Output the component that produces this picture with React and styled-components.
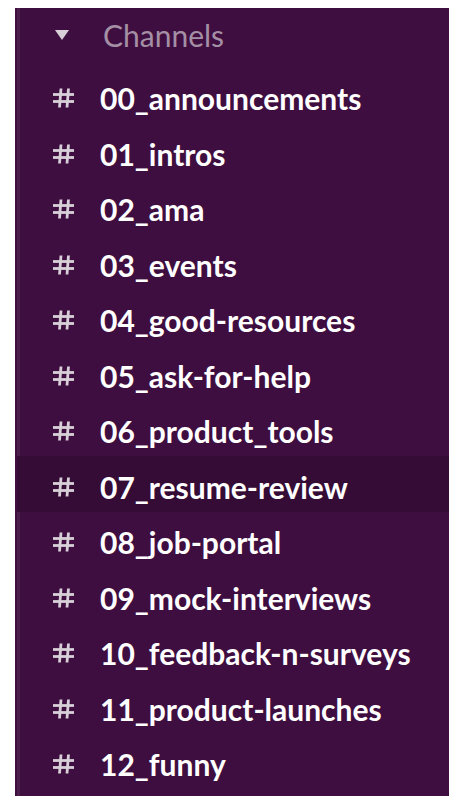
import React from "react";
import styled, { createGlobalStyle } from "styled-components";

const GlobalStyle = createGlobalStyle`
  body {
    margin: 0;
    background: #ffffff;
    font-family: Lato, "Open Sans", sans-serif;
  }
`;

const Page = styled.div`
  padding: 8px 9px 8px 15px;
  width: 458px;
  box-sizing: border-box;
`;

const Sidebar = styled.div`
  background: #3f0e40;
  border-left: 2px solid #3f0e40;
  box-shadow: inset 3px 0 0 #4a1d4b;
  padding-bottom: 7px;
`;

const Header = styled.div`
  height: 59.5px;
  display: flex;
  align-items: center;
  padding-left: 38px;
  box-sizing: border-box;
`;

const Caret = styled.svg`
  width: 14px;
  height: 10px;
  margin-right: 34px;
  margin-top: -6px;
`;

const HeaderLabel = styled.span`
  font-size: 30px;
  font-weight: 400;
  color: #a48fa5;
  margin-top: -5px;
`;

const Row = styled.div`
  height: 55.5px;
  display: flex;
  align-items: center;
  padding: 6px 0 0 35px;
  box-sizing: border-box;
  background: ${(p) => (p.$active ? "#350c36" : "transparent")};
`;

const Hash = styled.svg`
  width: 23px;
  height: 20px;
  margin-right: 25px;
  flex-shrink: 0;
`;

const Name = styled.span`
  font-size: 30px;
  font-weight: 700;
  color: #ffffff;
  white-space: nowrap;
`;

const channels = [
  "00_announcements",
  "01_intros",
  "02_ama",
  "03_events",
  "04_good-resources",
  "05_ask-for-help",
  "06_product_tools",
  "07_resume-review",
  "08_job-portal",
  "09_mock-interviews",
  "10_feedback-n-surveys",
  "11_product-launches",
  "12_funny",
];

function HashIcon() {
  return (
    <Hash viewBox="0 0 23 20">
      <g stroke="#d8d0d8" strokeWidth="2.8" fill="none">
        <path d="M1 6.5H22" />
        <path d="M1 13.5H22" />
        <path d="M9 0.5L7.5 19.5" />
        <path d="M16.5 0.5L15 19.5" />
      </g>
    </Hash>
  );
}

export default function App() {
  return (
    <Page>
      <GlobalStyle />
      <Sidebar>
        <Header>
          <Caret viewBox="0 0 14 10">
            <path d="M0 0H14L7 10Z" fill="#d8cfd8" />
          </Caret>
          <HeaderLabel>Channels</HeaderLabel>
        </Header>
        {channels.map((c) => (
          <Row key={c} $active={c === "07_resume-review"}>
            <HashIcon />
            <Name>{c}</Name>
          </Row>
        ))}
      </Sidebar>
    </Page>
  );
}
